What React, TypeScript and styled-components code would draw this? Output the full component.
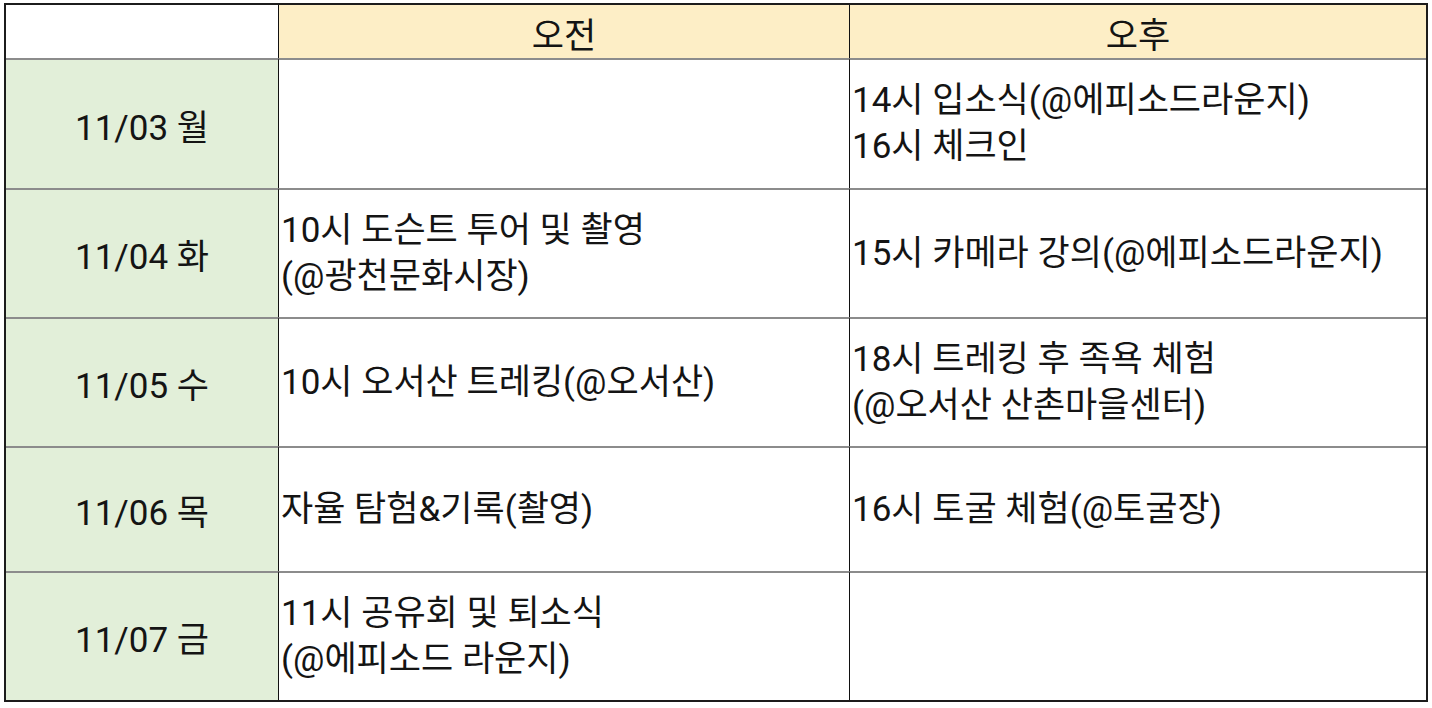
import React from "react";
import styled, { createGlobalStyle } from "styled-components";

const schedule = [
  { date: "11/03 월", am: [], pm: ["14시 입소식(@에피소드라운지)", "16시 체크인"], height: 130 },
  { date: "11/04 화", am: ["10시 도슨트 투어 및 촬영", "(@광천문화시장)"], pm: ["15시 카메라 강의(@에피소드라운지)"], height: 129 },
  { date: "11/05 수", am: ["10시 오서산 트레킹(@오서산)"], pm: ["18시 트레킹 후 족욕 체험", "(@오서산 산촌마을센터)"], height: 129 },
  { date: "11/06 목", am: ["자율 탐험&기록(촬영)"], pm: ["16시 토굴 체험(@토굴장)"], height: 125 },
  { date: "11/07 금", am: ["11시 공유회 및 퇴소식", "(@에피소드 라운지)"], pm: [], height: 129 },
];

const App = () => {
  const rows = ["53px", ...schedule.map((r) => `${r.height}px`)].join(" ");

  return (
    <>
      <GlobalStyle />
      <Table style={{ gridTemplateRows: rows }}>
        <HeadCell $first />
        <HeadCell $bg="#fdeec6">오전</HeadCell>
        <HeadCell $bg="#fdeec6">오후</HeadCell>
        {schedule.map((row) => (
          <React.Fragment key={row.date}>
            <DateCell>{row.date}</DateCell>
            <Cell>
              {row.am.map((line) => (
                <Line key={line}>{line}</Line>
              ))}
            </Cell>
            <Cell>
              {row.pm.map((line) => (
                <Line key={line}>{line}</Line>
              ))}
            </Cell>
          </React.Fragment>
        ))}
      </Table>
    </>
  );
};

export default App;

const GlobalStyle = createGlobalStyle`
  * {
    box-sizing: border-box;
  }
  body {
    margin: 0;
    background: #fff;
    font-family: Roboto, "Noto Sans CJK KR", sans-serif;
  }
`;

const Table = styled.div`
  display: grid;
  grid-template-columns: 272px 571px 1fr;
  width: 1424px;
  margin: 3px 0 0 4px;
  border: 2px solid #1c1c1c;
  color: #141414;
  font-size: 35px;
`;

const BaseCell = styled.div`
  display: flex;
  flex-direction: column;
  justify-content: center;
  min-width: 0;
  border-left: 1px solid #111;
  border-top: 2px solid #8c8c8c;
  background: #fff;
`;

const HeadCell = styled(BaseCell)<{ $bg?: string; $first?: boolean }>`
  align-items: center;
  border-top: none;
  border-left: ${(p) => (p.$first ? "none" : "1px solid #111")};
  background: ${(p) => p.$bg || "#fff"};
  padding-top: 2px;
`;

const DateCell = styled(BaseCell)`
  align-items: center;
  border-left: none;
  background: #e2efd9;
`;

const Cell = styled(BaseCell)`
  align-items: flex-start;
  padding-left: 2px;
`;

const Line = styled.div`
  line-height: 46px;
  white-space: nowrap;
`;
